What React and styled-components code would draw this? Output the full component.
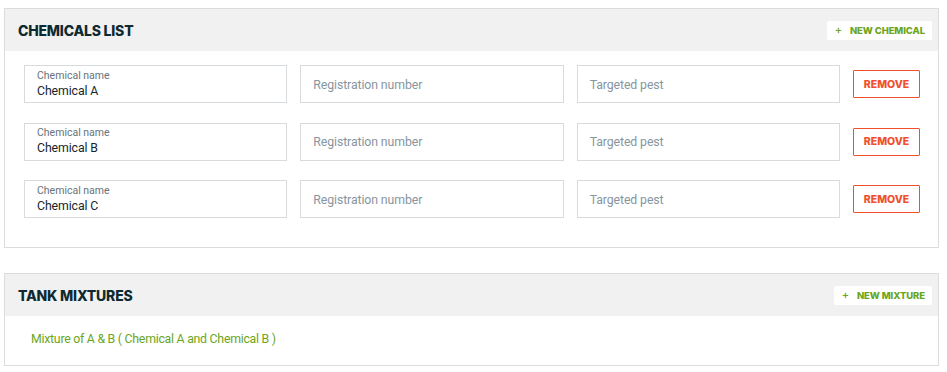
import React from "react";
import styled, { createGlobalStyle } from "styled-components";

const Global = createGlobalStyle`
  html, body { margin: 0; padding: 0; background: #fff; }
  body { font-family: Roboto, Lato, sans-serif; }
`;

const Page = styled.div`
  display: flex;
  flex-direction: column;
  gap: 25px;
  padding: 8px 8px 0 4px;
`;

const Card = styled.section`
  border: 1px solid #dcdcdc;
  background: #fff;
`;

const CardHeader = styled.header`
  display: flex;
  align-items: center;
  justify-content: space-between;
  height: 42px;
  background: #f1f1f1;
  padding: 0 6px 0 13px;
`;

const Title = styled.h2`
  margin: 0;
  font-family: Inter, sans-serif;
  font-weight: 800;
  font-size: 14px;
  letter-spacing: -0.2px;
  color: #0e2a30;
`;

const AddButton = styled.button`
  display: flex;
  align-items: center;
  gap: 8px;
  height: 19px;
  padding: 0 7px 0 8px;
  border: none;
  border-radius: 2px;
  background: #fff;
  color: #6aa51c;
  font-family: Inter, sans-serif;
  font-weight: 800;
  font-size: 9.5px;
  letter-spacing: -0.1px;
  cursor: pointer;
`;

const Plus = styled.span`
  font-weight: 500;
  font-size: 11px;
  color: #6aa51c;
`;

const List = styled.div`
  display: flex;
  flex-direction: column;
  gap: 19.5px;
  padding: 14px 18px 29px 19px;
`;

const Row = styled.div`
  display: grid;
  grid-template-columns: 1fr 1fr 1fr 67px;
  column-gap: 13px;
  align-items: center;
`;

const Field = styled.div`
  box-sizing: border-box;
  height: 38px;
  border: 1px solid #d8dbde;
  display: flex;
  flex-direction: column;
  justify-content: center;
  padding: 0 12px;
`;

const Label = styled.span`
  font-size: 10.5px;
  color: #66737c;
  line-height: 13px;
`;

const Value = styled.span`
  font-size: 12.3px;
  color: #14262c;
  line-height: 18px;
  letter-spacing: -0.1px;
`;

const Placeholder = styled.span`
  font-size: 12.3px;
  color: #8795a0;
  padding-top: 1px;
  letter-spacing: -0.1px;
`;

const RemoveButton = styled.button`
  box-sizing: border-box;
  height: 28px;
  border: 1px solid #f0512c;
  border-radius: 1px;
  background: #fff;
  color: #f0512c;
  font-family: Inter, sans-serif;
  font-weight: 800;
  font-size: 10.5px;
  padding: 0;
  cursor: pointer;
`;

const MixBody = styled.div`
  padding: 15px 26px 18px;
`;

const MixLink = styled.span`
  display: block;
  font-size: 12.3px;
  line-height: 16px;
  letter-spacing: -0.25px;
  color: #6aa51c;
`;

const chemicals = ["Chemical A", "Chemical B", "Chemical C"];

export default function App() {
  return (
    <>
      <Global />
      <Page>
        <Card>
          <CardHeader>
            <Title>CHEMICALS LIST</Title>
            <AddButton>
              <Plus>+</Plus>NEW CHEMICAL
            </AddButton>
          </CardHeader>
          <List>
            {chemicals.map((c) => (
              <Row key={c}>
                <Field>
                  <Label>Chemical name</Label>
                  <Value>{c}</Value>
                </Field>
                <Field>
                  <Placeholder>Registration number</Placeholder>
                </Field>
                <Field>
                  <Placeholder>Targeted pest</Placeholder>
                </Field>
                <RemoveButton>REMOVE</RemoveButton>
              </Row>
            ))}
          </List>
        </Card>
        <Card>
          <CardHeader>
            <Title>TANK MIXTURES</Title>
            <AddButton>
              <Plus>+</Plus>NEW MIXTURE
            </AddButton>
          </CardHeader>
          <MixBody>
            <MixLink>Mixture of A &amp; B ( Chemical A and Chemical B )</MixLink>
          </MixBody>
        </Card>
      </Page>
    </>
  );
}
